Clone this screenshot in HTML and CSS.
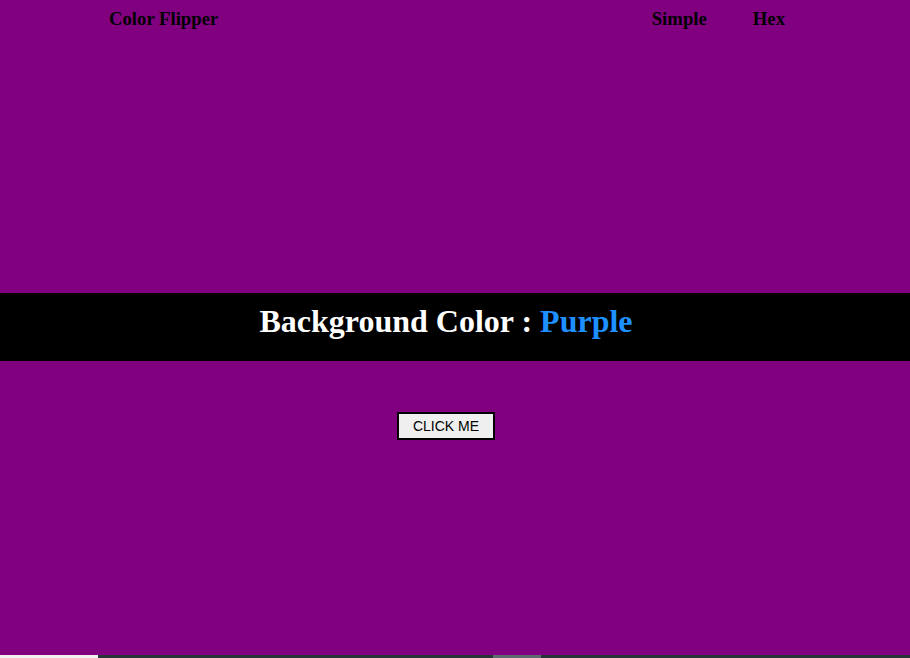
FILE: index.html
```html
<!DOCTYPE html>
<html lang="en">
<head>
<meta charset="utf-8">
<title>Color Flipper</title>
<link rel="stylesheet" href="styles.css">
</head>
<body>
<div class="page">
  <nav class="nav">
    <div class="brand">Color Flipper</div>
    <ul class="links">
      <li>Simple</li>
      <li>Hex</li>
    </ul>
  </nav>
  <main class="main">
    <div class="band">
      <h2 class="title">Background Color : <span class="color">Purple</span></h2>
    </div>
    <button class="btn">CLICK ME</button>
  </main>
  <div class="strip">
    <span class="strip-a"></span>
    <span class="strip-b"></span>
    <span class="strip-c"></span>
    <span class="strip-d"></span>
  </div>
</div>
</body>
</html>
```
FILE: styles.css
```css
html, body {
  margin: 0;
  padding: 0;
  height: 100%;
}
body {
  background: #800080;
  font-family: "Liberation Serif", "Times New Roman", serif;
  color: #000;
}
.page {
  min-height: 100vh;
  display: flex;
  flex-direction: column;
}
.nav {
  display: flex;
  justify-content: space-between;
  align-items: center;
  padding: 8px 125px 0 109px;
  font-weight: bold;
  font-size: 18.72px;
}
.links {
  display: flex;
  gap: 46px;
  list-style: none;
  margin: 0;
  padding: 0;
}
.main {
  display: flex;
  flex-direction: column;
  align-items: center;
  padding-top: 263px;
  padding-right: 18px;
  flex: 1;
}
.band {
  align-self: stretch;
  margin-right: -18px;
  padding-right: 18px;
  background: #000;
  height: 68px;
  box-sizing: border-box;
  display: flex;
  align-items: flex-start;
  justify-content: center;
  padding-top: 10px;
}
.title {
  margin: 0;
  color: #fff;
  font-size: 32px;
  font-weight: bold;
}
.color {
  color: #1e90ff;
}
.btn {
  margin-top: 51px;
  width: 98px;
  height: 28px;
  background: #efefef;
  border: 2px solid #000;
  font-family: "Liberation Sans", Arial, sans-serif;
  font-size: 14px;
  font-weight: normal;
  color: #000;
  padding: 0;
  cursor: pointer;
}
.strip {
  display: flex;
  height: 3px;
  margin-top: auto;
}
.strip-a { width: 98px; background: #f0f0f0; }
.strip-b { width: 395px; background: #283339; }
.strip-c { width: 48px; background: #5e6a71; }
.strip-d { flex: 1; background: #283339; }
```
